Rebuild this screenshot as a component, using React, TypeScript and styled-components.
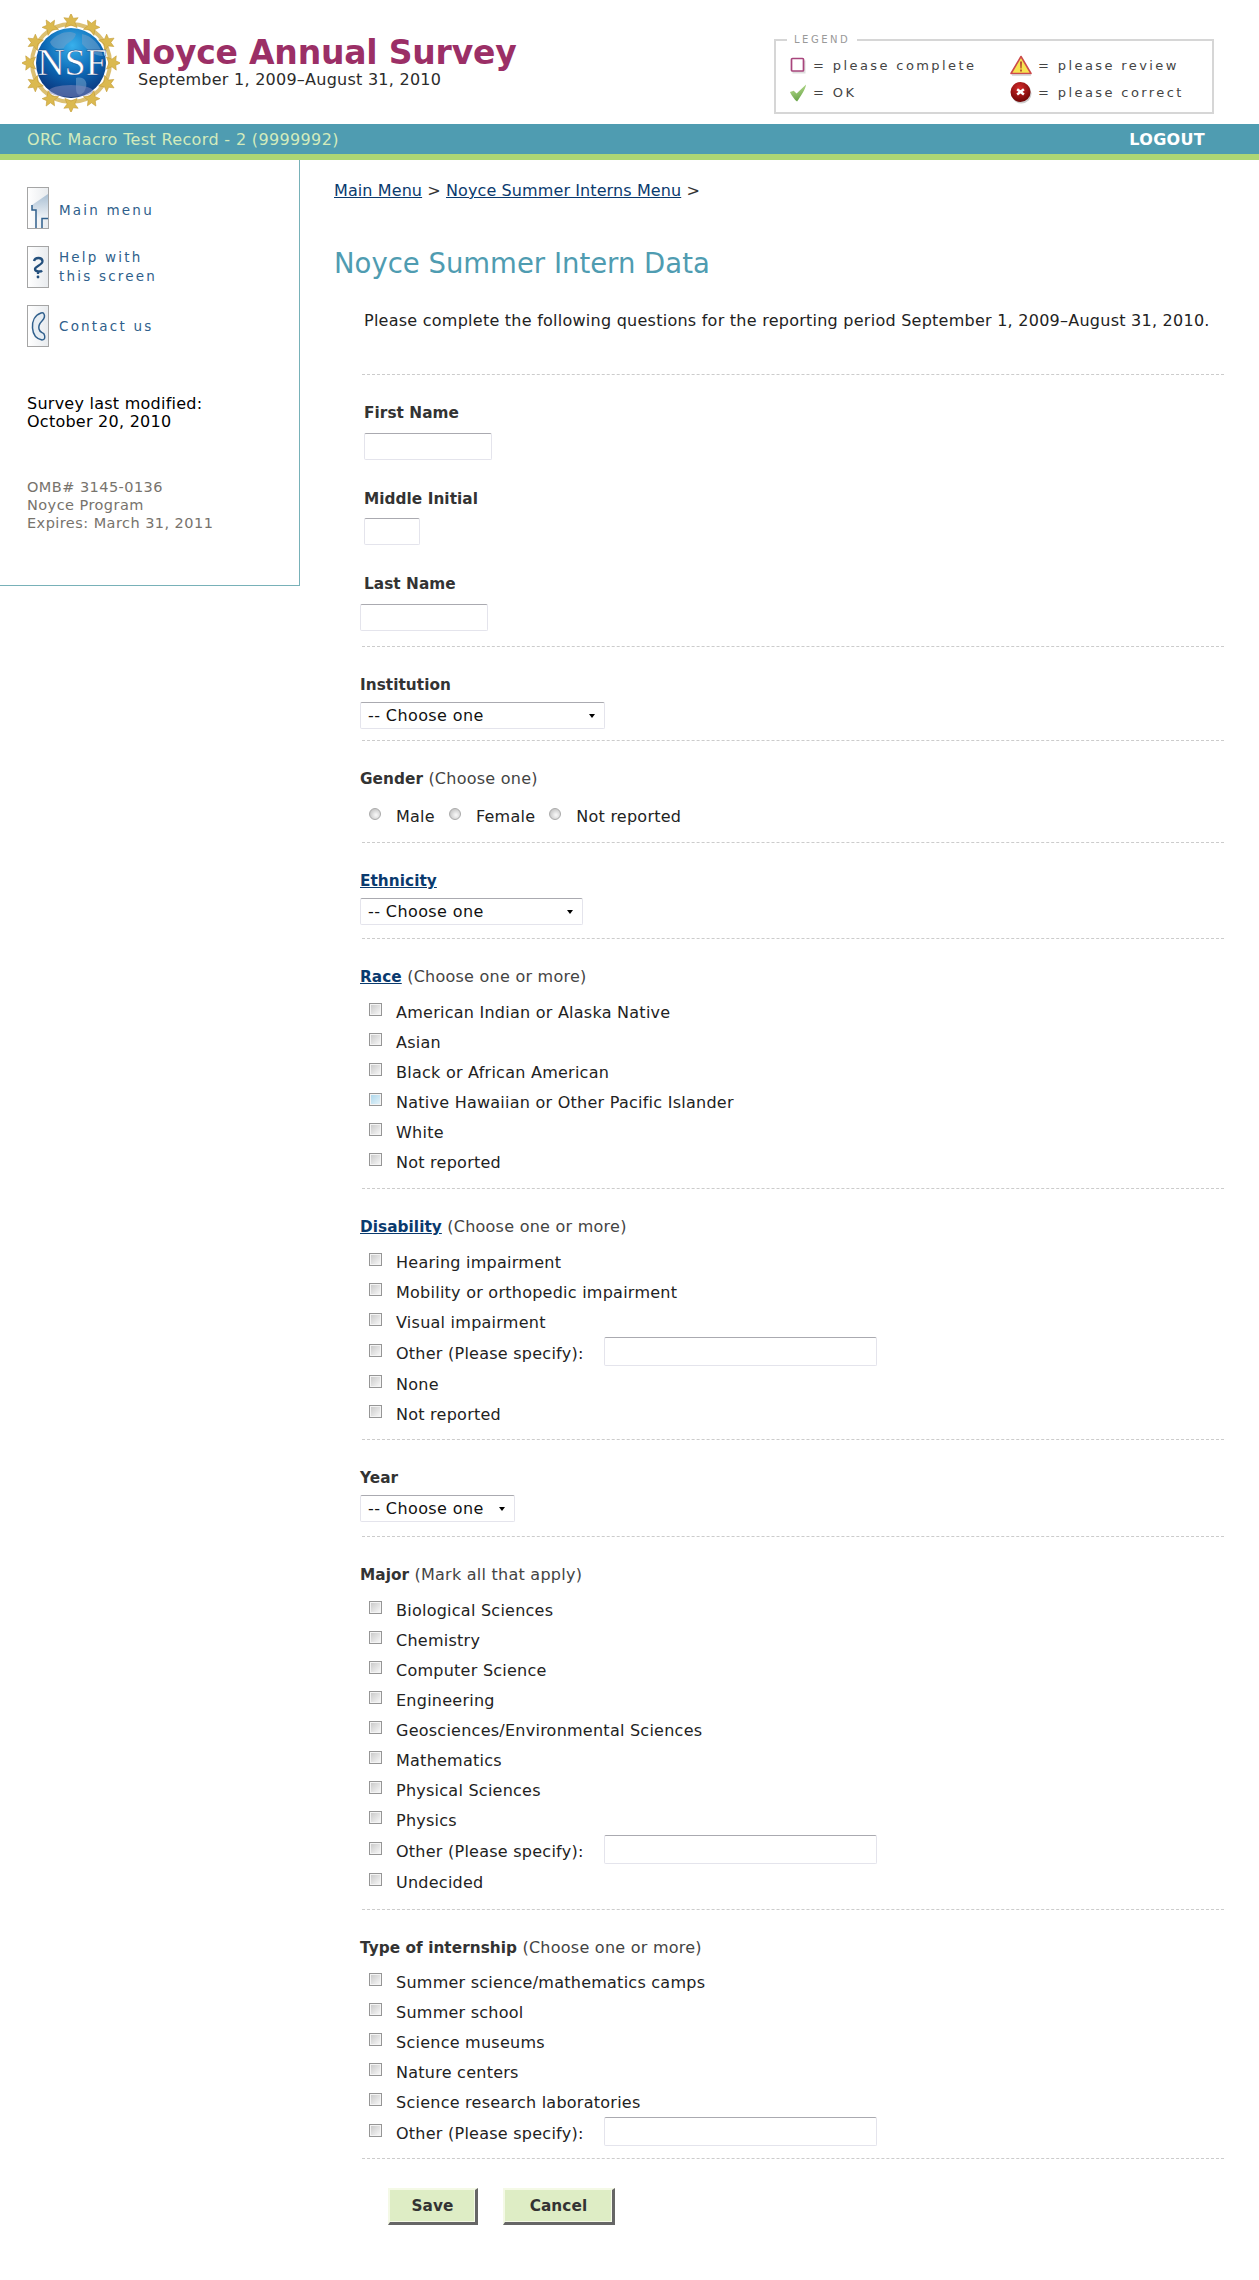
import * as React from "react";
import styled, { createGlobalStyle } from "styled-components";

const GlobalStyle = createGlobalStyle`
  html, body {
    margin: 0;
    padding: 0;
    background: #fff;
    font-family: "DejaVu Sans", Verdana, sans-serif;
    font-size: 16px;
    letter-spacing: 0.25px;
    color: #222;
  }
`;

const Page = styled.div`
  width: 1259px;
  height: 2280px;
  overflow: hidden;
`;

const Header = styled.header`
  display: flex;
  height: 124px;
  padding: 14px 45px 0 22px;
  box-sizing: border-box;
`;

const TitleBlock = styled.div`
  margin: 20px 0 0 5px;
`;

const Title = styled.h1`
  margin: 0;
  font-size: 33px;
  line-height: 38px;
  font-weight: bold;
  letter-spacing: -0.2px;
  color: #9b2f66;
`;

const Dates = styled.div`
  margin: -1px 0 0 13px;
  line-height: 18px;
  color: #2b2b2b;
`;

const LegendBox = styled.fieldset`
  margin: 21px 0 0 auto;
  padding: 7px 0 0 13px;
  width: 440px;
  height: 79px;
  box-sizing: border-box;
  border: 2px solid #d6d6d6;
  display: grid;
  grid-template-columns: 221px 1fr;
  grid-auto-rows: 27px;
  align-items: center;
`;

const LegendTitle = styled.legend`
  margin-left: -2px;
  padding: 0 7px;
  font-size: 10px;
  line-height: 10px;
  letter-spacing: 2.5px;
  color: #999;
`;

const LegendItem = styled.div`
  display: flex;
  align-items: center;
  gap: 6px;
  font-size: 13px;
  letter-spacing: 2.4px;
  color: #444;
`;

const IconSlot = styled.span<{ $w: number }>`
  display: flex;
  justify-content: center;
  flex: none;
  width: ${(p) => p.$w}px;
`;

const TopBar = styled.div`
  display: flex;
  justify-content: space-between;
  align-items: center;
  height: 30px;
  padding: 0 54px 0 27px;
  background: #4f9cb1;
  border-bottom: 6px solid #add674;
  letter-spacing: 0.35px;
  color: #d3ebbc;
`;

const Logout = styled.a`
  font-weight: bold;
  letter-spacing: 0.3px;
  color: #fff;
`;

const Body = styled.div`
  display: flex;
  align-items: flex-start;
`;

const Sidebar = styled.aside`
  flex: none;
  width: 300px;
  height: 426px;
  box-sizing: border-box;
  padding: 27px 0 0 27px;
  border-right: 1px solid #78b1b8;
  border-bottom: 1px solid #78b1b8;
`;

const NavLink = styled.a`
  display: flex;
  align-items: center;
  gap: 10px;
  height: 42px;
  margin-bottom: 17px;
  font-size: 13.5px;
  line-height: 19px;
  letter-spacing: 2.2px;
  color: #2f5f8c;
`;

const NavText = styled.span<{ $drop?: number }>`
  padding-top: ${(p) => p.$drop ?? 0}px;
`;

const Modified = styled.p`
  margin: 48px 0 0;
  line-height: 18px;
  color: #000;
`;

const Omb = styled.p`
  margin: 47px 0 0;
  font-size: 14.5px;
  letter-spacing: 0.45px;
  line-height: 18px;
  color: #77736c;
`;

const Main = styled.main`
  flex: 1;
  padding: 21px 35px 0 34px;
`;

const Crumbs = styled.nav`
  line-height: 20px;
  letter-spacing: 0.1px;
  color: #333;
`;

const Crumb = styled.a`
  color: #0a3a6e;
  text-decoration: underline;
`;

const PageTitle = styled.h2`
  margin: 43px 0 0;
  font-size: 27.5px;
  line-height: 38px;
  letter-spacing: 0;
  font-weight: normal;
  color: #4f9cb1;
`;

const Intro = styled.p`
  margin: 29px 0 0 30px;
  line-height: 20px;
`;

const Divider = styled.hr<{ $top?: number }>`
  margin: ${(p) => p.$top ?? 14}px 0 0 28px;
  border: 0;
  border-top: 1px dashed #ccc;
`;

const Section = styled.section`
  margin: 28px 0 0 26px;
`;

const Label = styled.div<{ $inset?: boolean; $after?: number; $gap?: number }>`
  margin: ${(p) => p.$gap ?? 0}px 0 ${(p) => p.$after ?? 7}px ${(p) => (p.$inset ? 4 : 0)}px;
  font-size: 15.3px;
  letter-spacing: 0.05px;
  line-height: 20px;
  font-weight: bold;
  color: #333;
`;

const Hint = styled.span`
  font-size: 16px;
  letter-spacing: 0.25px;
  font-weight: normal;
  color: #444;
`;

const TermLink = styled.a`
  color: #0a3a6e;
  text-decoration: underline;
`;

const TextBox = styled.input<{ $w: number; $inset?: boolean }>`
  display: block;
  width: ${(p) => p.$w}px;
  height: 27px;
  margin-left: ${(p) => (p.$inset ? 4 : 0)}px;
  box-sizing: border-box;
  background: #fff;
  border: 1px solid #e4e4ec;
  border-top-color: #aaaab0;
  border-radius: 2px;
  outline: none;
`;

const SelectWrap = styled.div<{ $w: number }>`
  position: relative;
  width: ${(p) => p.$w}px;
  height: 27px;
  &::after {
    content: "";
    position: absolute;
    right: 10px;
    top: 12px;
    border: 3.5px solid transparent;
    border-top: 4px solid #000;
    border-bottom: 0;
    pointer-events: none;
  }
`;

const Dropdown = styled.select`
  appearance: none;
  display: block;
  width: 100%;
  height: 100%;
  padding: 0 0 0 7px;
  box-sizing: border-box;
  background: #fff;
  border: 1px solid #e4e4ec;
  border-top-color: #aaaab0;
  border-radius: 2px;
  font: inherit;
  letter-spacing: 0.4px;
  color: #111;
`;

const Options = styled.div<{ $before?: number; $after?: number }>`
  margin: ${(p) => p.$before ?? 10}px 0 ${(p) => p.$after ?? 12}px;
`;

const OptionRow = styled.label<{ $tall?: boolean }>`
  display: flex;
  align-items: center;
  height: ${(p) => (p.$tall ? 32 : 30)}px;
  padding-left: 9px;
`;

const Box = styled.input<{ $focus?: boolean }>`
  appearance: none;
  flex: none;
  width: 13px;
  height: 13px;
  margin: -5px 14px 0 0;
  box-sizing: border-box;
  border: 1px solid #969696;
  box-shadow: inset 0 0 0 1px #f4f4f4;
  background: ${(p) =>
    p.$focus
      ? "linear-gradient(135deg, #a9d5ea, #eaf6fb)"
      : "linear-gradient(135deg, #c6c6c6, #fbfbfb)"};
`;

const Radios = styled.div`
  display: flex;
  align-items: center;
  height: 30px;
  margin-top: 12px;
  padding-left: 9px;
`;

const RadioLabel = styled.label`
  display: flex;
  align-items: center;
  margin-right: 14px;
`;

const Radio = styled.input`
  appearance: none;
  flex: none;
  width: 12px;
  height: 12px;
  margin: -5px 15px 0 0;
  box-sizing: border-box;
  border: 1px solid #aaa;
  border-radius: 50%;
  background: radial-gradient(circle at 60% 60%, #f4f4f4 10%, #bcbcbc 90%);
`;

const SpecifyBox = styled(TextBox)`
  margin: 0 0 4px 20px;
  height: 29px;
`;

const Actions = styled.div`
  display: flex;
  gap: 25px;
  margin: 29px 0 0 54px;
`;

const FormButton = styled.button<{ $w: number }>`
  width: ${(p) => p.$w}px;
  height: 37px;
  padding: 0;
  box-sizing: border-box;
  background: #deedc5;
  border: 2px solid #f4f9e6;
  border-right: 3px solid #666;
  border-bottom: 3px solid #666;
  box-shadow: inset -1px -1px 0 #f4f9e6;
  font: inherit;
  font-size: 15.3px;
  font-weight: bold;
  letter-spacing: 0.1px;
  color: #333;
`;

const LogoImage = () => {
  const stars = Array.from({ length: 12 }, (_, i) => {
    const deg = i * 30;
    const a = (deg * Math.PI) / 180;
    return { x: 49 + 42 * Math.cos(a), y: 49 + 42 * Math.sin(a), r: deg + 90 };
  });
  return (
    <svg width="98" height="98" viewBox="0 0 98 98">
      <defs>
        <radialGradient id="globe" cx="52%" cy="25%" r="80%">
          <stop offset="0" stopColor="#38b0ec" />
          <stop offset="0.5" stopColor="#0c69b6" />
          <stop offset="1" stopColor="#0a2c72" />
        </radialGradient>
      </defs>
      <circle cx="49" cy="49" r="39" fill="none" stroke="#dcc072" strokeWidth="4" />
      {stars.map((s, i) => (
        <path
          key={i}
          transform={`translate(${s.x} ${s.y}) rotate(${s.r}) scale(1.1)`}
          d="M0 -7 L2 -2.500 L6.500 -3 L3.500 1 L5.500 6 L0 3.500 L-5.500 6 L-3.500 1 L-6.500 -3 L-2 -2.500 Z"
          fill="#dbb94f"
          stroke="#c39b36"
          strokeWidth="0.5"
        />
      ))}
      <circle cx="49" cy="49" r="35" fill="url(#globe)" />
      <path
        d="M28 28 C36 18 48 16 54 20 C52 28 44 28 42 34 C36 36 30 34 28 28 Z M60 20 C70 22 78 30 81 42 C72 42 66 36 60 30 Z M54 64 C62 62 68 68 62 78 C58 82 54 82 54 74 Z"
        fill="#6d9fc9"
        opacity="0.6"
      />
      <ellipse cx="49" cy="77" rx="22" ry="6" fill="#7f86bb" opacity="0.55" />
      <text
        x="50"
        y="61"
        textAnchor="middle"
        fontFamily="'Liberation Serif', serif"
        fontSize="38"
        letterSpacing="0"
        fill="#fff"
        stroke="#0b3a80"
        strokeWidth="0.4"
      >
        NSF
      </text>
    </svg>
  );
};

const BoxIcon = () => (
  <svg width="16" height="17" viewBox="0 0 16 17">
    <rect x="2.500" y="3.500" width="13" height="13" fill="#bbb" opacity="0.5" />
    <rect x="1.500" y="1.500" width="12" height="12.500" rx="1" fill="#fff" stroke="#a8457c" strokeWidth="1.7" />
  </svg>
);

const CheckIcon = () => (
  <svg width="19" height="20" viewBox="0 0 19 20">
    <defs>
      <linearGradient id="tick" x1="0" y1="0" x2="0.3" y2="1">
        <stop offset="0" stopColor="#c4e59b" />
        <stop offset="1" stopColor="#6aa548" />
      </linearGradient>
    </defs>
    <path d="M1 9 L5 7.500 L8 10.500 L18 1 C17.500 6 12 14 8.500 19 C6 17.500 3 13 1 9 Z" fill="url(#tick)" />
  </svg>
);

const WarnIcon = () => (
  <svg width="22" height="21" viewBox="0 0 22 21">
    <path d="M11 1.500 L21 18.500 L1 18.500 Z" fill="#f7e34f" stroke="#cc4b4b" strokeWidth="1.600" strokeLinejoin="round" />
    <path d="M10 6.500 H12 L11.600 13.500 H10.400 Z M10.100 14.500 H11.900 V16.500 H10.100 Z" fill="#b5482c" />
    <path d="M2 20 H21" stroke="#bbb" strokeWidth="1" />
  </svg>
);

const ErrorIcon = () => (
  <svg width="23" height="23" viewBox="0 0 23 23">
    <defs>
      <radialGradient id="err" cx="45%" cy="30%" r="70%">
        <stop offset="0" stopColor="#d42a2a" />
        <stop offset="1" stopColor="#6d0505" />
      </radialGradient>
    </defs>
    <circle cx="12" cy="12.500" r="10.500" fill="#ccc" />
    <circle cx="11" cy="11" r="10.500" fill="url(#err)" />
    <path d="M7.500 8 L14.500 13.500 M14.500 8 L7.500 13.500" stroke="#fff" strokeWidth="2.600" />
  </svg>
);

const NavTile: React.FC<{ children: React.ReactNode }> = ({ children }) => (
  <svg width="22" height="42" viewBox="0 0 22 42" style={{ flex: "none" }}>
    <defs>
      <linearGradient id="tile" x1="0" y1="0" x2="1" y2="0">
        <stop offset="0" stopColor="#fff" />
        <stop offset="1" stopColor="#e8ebee" />
      </linearGradient>
      <linearGradient id="roof" x1="0" y1="0" x2="0" y2="1">
        <stop offset="0" stopColor="#a9bfd3" />
        <stop offset="1" stopColor="#f2f5f8" />
      </linearGradient>
    </defs>
    <rect x="0.500" y="0.500" width="21" height="41" fill="url(#tile)" stroke="#a5a5a5" />
    {children}
  </svg>
);

const HomeIcon = () => (
  <NavTile>
    <path d="M21 7 L5 18 V23 H9 V32 H21 Z" fill="url(#roof)" />
    <path d="M5 18 V23 H9 V41 M15 41 V31.500 H21" fill="none" stroke="#2f5f8c" strokeWidth="1.500" />
  </NavTile>
);

const HelpIcon = () => (
  <NavTile>
    <path d="M7 15 C8 11 15 11 15.500 15 C16 19 8 20 8 23 C8 26 14 26 15 24.500 M11 26 V28" fill="none" stroke="#234f7c" strokeWidth="2.300" />
    <circle cx="11" cy="31" r="1.400" fill="#234f7c" />
  </NavTile>
);

const PhoneIcon = () => (
  <NavTile>
    <path d="M14 8 C8 10 5 16 5.500 23 C6 30 10 34 15 35 C18 35 18.500 32 17 29 C15.500 27 13 28 12 24 C11 20 13 18 15 16 C17 14 18 11 17 9 C16.500 7.500 15 7.700 14 8 Z" fill="#e6edf3" stroke="#2f5f8c" strokeWidth="1.500" />
  </NavTile>
);

const race = ["American Indian or Alaska Native", "Asian", "Black or African American", "Native Hawaiian or Other Pacific Islander", "White", "Not reported"];
const majors = ["Biological Sciences", "Chemistry", "Computer Science", "Engineering", "Geosciences/Environmental Sciences", "Mathematics", "Physical Sciences", "Physics"];
const internships = ["Summer science/mathematics camps", "Summer school", "Science museums", "Nature centers", "Science research laboratories"];

const Option: React.FC<{ text: string; focus?: boolean }> = ({ text, focus }) => (
  <OptionRow>
    <Box type="checkbox" $focus={focus} />
    {text}
  </OptionRow>
);

const SpecifyOption = () => (
  <OptionRow $tall>
    <Box type="checkbox" />
    Other (Please specify):
    <SpecifyBox type="text" $w={273} />
  </OptionRow>
);

const ChooseOne: React.FC<{ width: number }> = ({ width }) => (
  <SelectWrap $w={width}>
    <Dropdown defaultValue="">
      <option value="">-- Choose one</option>
    </Dropdown>
  </SelectWrap>
);

export default function App() {
  return (
    <Page>
      <GlobalStyle />
      <Header>
        <LogoImage />
        <TitleBlock>
          <Title>Noyce Annual Survey</Title>
          <Dates>September 1, 2009–August 31, 2010</Dates>
        </TitleBlock>
        <LegendBox>
          <LegendTitle>LEGEND</LegendTitle>
          <LegendItem>
            <IconSlot $w={18}><BoxIcon /></IconSlot>= please complete
          </LegendItem>
          <LegendItem>
            <IconSlot $w={22}><WarnIcon /></IconSlot>= please review
          </LegendItem>
          <LegendItem>
            <IconSlot $w={18}><CheckIcon /></IconSlot>= OK
          </LegendItem>
          <LegendItem>
            <IconSlot $w={22}><ErrorIcon /></IconSlot>= please correct
          </LegendItem>
        </LegendBox>
      </Header>
      <TopBar>
        <span>ORC Macro Test Record - 2 (9999992)</span>
        <Logout>LOGOUT</Logout>
      </TopBar>
      <Body>
        <Sidebar>
          <NavLink><HomeIcon /><NavText $drop={4}>Main menu</NavText></NavLink>
          <NavLink><HelpIcon /><NavText>Help with<br />this screen</NavText></NavLink>
          <NavLink><PhoneIcon /><NavText>Contact us</NavText></NavLink>
          <Modified>Survey last modified:<br />October 20, 2010</Modified>
          <Omb>OMB# 3145-0136<br />Noyce Program<br />Expires: March 31, 2011</Omb>
        </Sidebar>
        <Main>
          <Crumbs>
            <Crumb>Main Menu</Crumb> &gt; <Crumb>Noyce Summer Interns Menu</Crumb> &gt;
          </Crumbs>
          <PageTitle>Noyce Summer Intern Data</PageTitle>
          <Intro>Please complete the following questions for the reporting period September 1, 2009–August 31, 2010.</Intro>
          <Divider $top={43} />

          <Section>
            <Label $inset $after={10}>First Name</Label>
            <TextBox type="text" $w={128} $inset />
            <Label $inset $gap={29} $after={9}>Middle Initial</Label>
            <TextBox type="text" $w={56} $inset />
            <Label $inset $gap={29} $after={10}>Last Name</Label>
            <TextBox type="text" $w={128} />
          </Section>
          <Divider $top={15} />

          <Section>
            <Label>Institution</Label>
            <ChooseOne width={245} />
          </Section>
          <Divider $top={11} />

          <Section>
            <Label>Gender <Hint>(Choose one)</Hint></Label>
            <Radios>
              <RadioLabel><Radio type="radio" name="gender" />Male</RadioLabel>
              <RadioLabel><Radio type="radio" name="gender" />Female</RadioLabel>
              <RadioLabel><Radio type="radio" name="gender" />Not reported</RadioLabel>
            </Radios>
          </Section>
          <Divider $top={11} />

          <Section>
            <Label><TermLink>Ethnicity</TermLink></Label>
            <ChooseOne width={223} />
          </Section>
          <Divider $top={13} />

          <Section>
            <Label $after={0}><TermLink>Race</TermLink> <Hint>(Choose one or more)</Hint></Label>
            <Options>
              {race.map((r, i) => <Option key={r} text={r} focus={i === 3} />)}
            </Options>
          </Section>
          <Divider $top={-1} />

          <Section>
            <Label $after={0}><TermLink>Disability</TermLink> <Hint>(Choose one or more)</Hint></Label>
            <Options $after={10}>
              <Option text="Hearing impairment" />
              <Option text="Mobility or orthopedic impairment" />
              <Option text="Visual impairment" />
              <SpecifyOption />
              <Option text="None" />
              <Option text="Not reported" />
            </Options>
          </Section>
          <Divider $top={0} />

          <Section>
            <Label>Year</Label>
            <ChooseOne width={155} />
          </Section>
          <Divider />

          <Section>
            <Label $after={0}>Major <Hint>(Mark all that apply)</Hint></Label>
            <Options>
              {majors.map((m) => <Option key={m} text={m} />)}
              <SpecifyOption />
              <Option text="Undecided" />
            </Options>
          </Section>
          <Divider $top={0} />

          <Section>
            <Label $after={0}>Type of internship <Hint>(Choose one or more)</Hint></Label>
            <Options $before={9} $after={9}>
              {internships.map((t) => <Option key={t} text={t} />)}
              <SpecifyOption />
            </Options>
          </Section>
          <Divider $top={0} />

          <Actions>
            <FormButton $w={90}>Save</FormButton>
            <FormButton $w={112}>Cancel</FormButton>
          </Actions>
        </Main>
      </Body>
    </Page>
  );
}
